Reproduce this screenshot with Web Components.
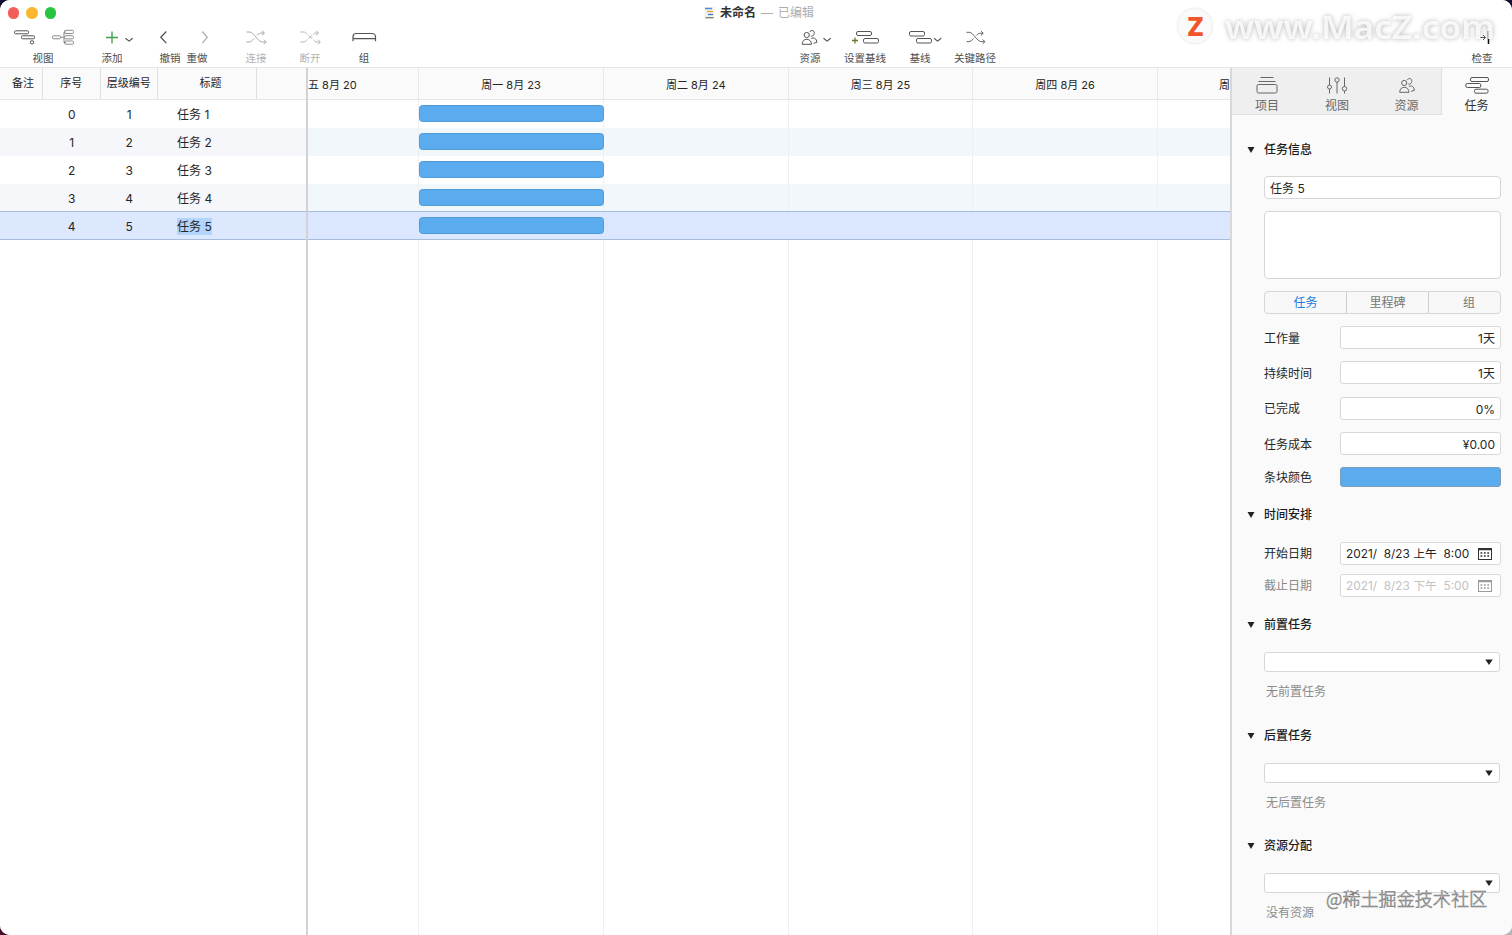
<!DOCTYPE html>
<html lang="zh-CN">
<head>
<meta charset="utf-8">
<title>未命名</title>
<style>
  body {
    margin: 0;
    background: linear-gradient(90deg, #4a0a2c 50%, #b5b5b9 50%) 0 100% / 100% 50% no-repeat #140f33;
    font-family: Inter, "Noto Sans CJK SC", sans-serif;
    font-size: 12px;
    color: #262626;
    overflow: hidden;
  }
</style>
</head>
<body>
<project-window></project-window>

<script>
/* base comun: cada elemento define su html y sus estilos */
class BaseElement extends HTMLElement {
  constructor() {
    super();
    this.attachShadow({ mode: 'open' });
  }

  connectedCallback() {
    this.shadowRoot.innerHTML = `<style>* { box-sizing: border-box; }</style>${this.render()}`;
  }
}

/* dibujos de los iconos */
const people = `
  <circle cx="5.200" cy="5" r="2.600"/><path d="M.7 14.300c0-3 1.700-5 4.500-5s4.800 2 4.800 5z"/>
  <path d="M8.200 2.100C8.900.7 10.300.2 11.500.7c1.500.7 1.600 2.700.8 4.100-.7 1.200-2 1.700-3 1.200"/>
  <path d="M9.800 8.600c2.600-1.600 5.400 0 5.600 3.800l-3.300.9"/>`;
const shuffle = `
  <path d="M0 2.500h3c4.500 0 8 10 13 10h3.500M0 12.500h2.500c1.800 0 3.500-1.500 5-3.300M10.500 6c1.500-1.800 3-2.500 5-2.500h2"/>
  <path d="M15.500 1.200l2.500 2.300-2.500 2.300M17.500 10.200l2.300 2.300-2.300 2.300"/>`;
const chevron = '<path d="M0 0l3.600 2.800L7.200 0"/>';

const icons = {
  view: `<g><rect x="1.500" y="4.800" width="14" height="3" rx="1"/><rect x="8.500" y="9.800" width="13" height="3" rx="1"/><circle cx="19" cy="16.300" r="1.700"/></g>
    <g stroke="#8b8b8b"><rect x="39.500" y="9.800" width="8" height="3" rx="1"/><path d="M47.500 11.300h3.500M51 5.800v11M51 6h2M51 16.500h2"/>
    <rect x="51.500" y="4.300" width="9" height="3.200" rx="1.200"/><rect x="51.500" y="9.700" width="9" height="3.200" rx="1.200"/><rect x="51.500" y="15" width="9" height="3.200" rx="1.200"/></g>`,
  add: `<path d="M22 5.500v12M16 11.500h12" stroke="#41a047" stroke-width="1.300"/><g transform="translate(35.500 12.300)" stroke-width="1.200">${chevron}</g>`,
  undo: '<path d="M9.300 5.500L3.800 11.300l5.500 5.800" stroke-width="1.300"/>',
  redo: '<path d="M18.300 5.500l5 5.800-5 5.800" stroke="#aaa" stroke-width="1.200"/>',
  link: `<g transform="translate(3.500 3.500)" stroke="#a8a8a8">${shuffle}</g>`,
  unlink: `<g transform="translate(3.500 3.500)" stroke="#b4b4b4"><path d="M0 2.500h3c1.500 0 2.600 1 3.500 2.300M0 12.500h2.500c1.800 0 3-1 4.200-2.500M13 10.200c1 1.500 2.200 2.300 3.500 2.300h3M12.700 4.800c.9-.9 1.800-1.300 3-1.300h2M8 5.700l3.700 3.700M11.700 5.700L8 9.400"/><path d="M15.500 1.200l2.500 2.300-2.500 2.300M17.500 10.200l2.300 2.300-2.300 2.300"/></g>`,
  group: '<path d="M2 15.200V10.500C2 8.500 3.500 7.500 5 7.500h16c1.500 0 3.500 1 3.500 3v4.700M2 12.700h22.500" stroke-width="1.200"/>',
  people: `<g transform="translate(13.500 4)">${people}</g><g transform="translate(35.500 12.300)" stroke-width="1.200">${chevron}</g>`,
  setBaseline: `<rect x="13.500" y="5.500" width="15" height="4" rx="1.500"/><rect x="20.500" y="12.500" width="15" height="4.500" rx="1.500"/><path d="M12 11.500v6M9 14.500h6" stroke="#6c7a2c" stroke-width="1.300"/>`,
  baseline: `<rect x="11.500" y="5.500" width="15" height="4.500" rx="1.500"/><rect x="18.500" y="12.500" width="15" height="4.500" rx="1.500"/><g transform="translate(36 12.300)" stroke-width="1.200">${chevron}</g>`,
  path: `<g transform="translate(13.500 4) scale(.93)">${shuffle}</g>`,
  inspect: '<path d="M11 11.500h5M14 9l2.500 2.500L14 14" stroke="#555"/><path d="M19.500 5v13" stroke="#111" stroke-width="1.500"/>',
};

class ToolItem extends BaseElement {
  render() {
    const width = this.getAttribute('width') || 26;
    return `
      <style>
        :host {
          display: flex;
          flex-direction: column;
          align-items: center;
          width: ${width}px;
          font-size: 10.500px;
          line-height: 14px;
          color: #4e4e4e;
          white-space: nowrap;
        }
        :host([off]) { color: #b3b3b3; }
        svg { display: block; overflow: visible; margin-bottom: 2px; }
        span { display: flex; justify-content: center; width: 0; }
      </style>
      <svg width="${width}" height="24" fill="none" stroke="#555" stroke-linejoin="round">${icons[this.getAttribute('icon')]}</svg>
      <span><slot></slot></span>
    `;
  }
}
customElements.define('tool-item', ToolItem);

/* barra de titulo y herramientas */
class WindowToolbar extends BaseElement {
  render() {
    return `
      <style>
        :host {
          display: block;
          height: 68px;
          background: #fff;
          border-bottom: 1px solid #e6e6e6;
        }
        .title {
          display: grid;
          grid-template-columns: 1fr auto 1fr;
          align-items: center;
          height: 26px;
          padding: 0 0 0 7px;
        }
        .lights { display: flex; gap: 7.500px; padding-left: .5px; }
        .lights i { width: 11.300px; height: 11.300px; border-radius: 50%; background: #f35f58; }
        .lights i:nth-child(2) { background: #fbb72f; }
        .lights i:nth-child(3) { background: #28c440; }
        .name { display: flex; align-items: center; gap: 5px; margin-right: 1px; color: #adadad; line-height: 16px; }
        b { font-weight: 600; color: #333; }
        .tools { display: flex; padding: 0 17px 0 13px; }
        svg { display: block; }
      </style>
      <div class="title">
        <div class="lights"><i></i><i></i><i></i></div>
        <div class="name">
          <svg width="11" height="12">
            <rect x=".5" width="10" height="12" fill="#f4f1ea"/>
            <path d="M1 1.500h7" stroke="#4c91d8" stroke-width="1.500"/><path d="M3 4.500h6" stroke="#e0a33c" stroke-width="1.300"/>
            <path d="M4 7.500h5" stroke="#3f79c2" stroke-width="1.300"/><path d="M1.500 10.700h8" stroke="#777" stroke-width="1.200"/>
          </svg>
          <b>未命名</b><span>—</span><span>已编辑</span>
        </div>
      </div>
      <div class="tools">
        <tool-item icon="view" width="60">视图</tool-item>
        <tool-item icon="add" width="44" style="margin-left:17px">添加</tool-item>
        <tool-item icon="undo" style="margin-left:23px">撤销</tool-item>
        <tool-item icon="redo" style="margin-left:1px">重做</tool-item>
        <tool-item icon="link" off style="margin-left:33px">连接</tool-item>
        <tool-item icon="unlink" off style="margin-left:28px">断开</tool-item>
        <tool-item icon="group" style="margin-left:28px">组</tool-item>
        <tool-item icon="people" width="44" style="margin-left:411px">资源</tool-item>
        <tool-item icon="setBaseline" width="44" style="margin-left:11px">设置基线</tool-item>
        <tool-item icon="baseline" width="44" style="margin-left:11px">基线</tool-item>
        <tool-item icon="path" width="44" style="margin-left:11px">关键路径</tool-item>
        <tool-item icon="inspect" style="margin-left:auto">检查</tool-item>
      </div>
    `;
  }
}
customElements.define('window-toolbar', WindowToolbar);

const tasks = [1, 2, 3, 4, 5];

/* tabla de tareas */
class TaskOutline extends BaseElement {
  render() {
    return `
      <style>
        :host {
          display: block;
          width: 308px;
          background: #fff;
          border-right: 2px solid #d2d2d2;
        }
        .head, .row { display: grid; grid-template-columns: 43px 57.500px 57.500px 99px 1fr; }
        .head {
          height: 32px;
          background: #fafafa;
          border-bottom: 1px solid #e6e6e6;
          font-size: 11px;
          line-height: 31px;
          text-align: center;
        }
        .head span { border-right: 1px solid #e0e0e0; white-space: nowrap; }
        .head span:first-child { padding-left: 4px; }
        .head span:nth-child(4) { padding-left: 7px; }
        .head span:last-child { border: 0; }
        .row { height: 28px; line-height: 30px; text-align: center; }
        .row:nth-child(odd) { background: #f5f7fb; }
        .row:last-child {
          height: 29px;
          margin-top: -1px;
          background: #dbe8fe;
          border: solid #a8bcdc;
          border-width: 1px 0;
        }
        .row .name { text-align: left; padding-left: 19px; }
        mark { background: #b3d4fb; color: inherit; padding: 1px 0; }
      </style>
      <div class="head"><span>备注</span><span>序号</span><span>层级编号</span><span>标题</span><span></span></div>
      ${tasks.map((n, i) => `
        <div class="row">
          <span></span><span>${i}</span><span>${n}</span>
          <span class="name">${n === 5 ? `<mark>任务 ${n}</mark>` : `任务 ${n}`}</span>
        </div>`).join('')}
    `;
  }
}
customElements.define('task-outline', TaskOutline);

/* diagrama de gantt */
class GanttChart extends BaseElement {
  render() {
    const days = ['周一 8月 23', '周二 8月 24', '周三 8月 25', '周四 8月 26'];
    return `
      <style>
        :host {
          --day: 184.700px;
          display: flex;
          flex-direction: column;
          flex: 1;
          min-width: 0;
          background: #fff;
        }
        .head {
          display: flex;
          flex: none;
          height: 32px;
          background: #fafafa;
          border-bottom: 1px solid #e6e6e6;
          font-size: 11px;
          line-height: 35px;
          text-align: center;
          white-space: nowrap;
        }
        .head span { flex: none; width: var(--day); border-right: 1px solid #e9e9e9; }
        /* los dias de los extremos solo se ven en parte */
        .head .first { width: 111.200px; text-align: left; }
        .head .last { flex: 1; width: auto; border: 0; text-align: right; }
        .body {
          flex: 1;
          background: repeating-linear-gradient(90deg, transparent 0 183.700px, #f0f0f0 183.700px 184.700px) -73.500px 0 / 1200px 100% no-repeat;
        }
        .row { height: 28px; padding: 5px 0 0 111px; }
        .row:nth-child(even) { background: rgba(232, 240, 248, .55); }
        .row:last-child {
          height: 29px;
          margin-top: -1px;
          background: rgba(217, 230, 254, .94);
          border: solid #a8bcdc;
          border-width: 1px 0;
        }
        .bar {
          width: 185px;
          height: 17px;
          background: #5aacee;
          border: 1px solid #509bd8;
          border-radius: 3.500px;
        }
      </style>
      <div class="head">
        <span class="first">五 8月 20</span>${days.map(day => `<span>${day}</span>`).join('')}<span class="last">周</span>
      </div>
      <div class="body">${tasks.map(() => '<div class="row"><div class="bar"></div></div>').join('')}</div>
    `;
  }
}
customElements.define('gantt-chart', GanttChart);

/* pestañas del inspector */
class InspectorTabs extends BaseElement {
  render() {
    return `
      <style>
        :host { display: grid; grid-template-columns: repeat(4, 1fr); height: 47px; }
        div {
          display: flex;
          flex-direction: column;
          align-items: center;
          padding-top: 8px;
          background: #efefef;
          border-bottom: 1px solid #dedede;
          color: #6a6a6a;
          line-height: 17px;
        }
        .on { background: #fafafa; border-color: #fafafa; color: #333; padding-right: 1px; }
        .before { border-right: 1px solid #dedede; }
        svg { display: block; overflow: visible; margin-bottom: 3px; }
      </style>
      <div>
        <svg width="22" height="18" fill="none" stroke="#666"><path d="M4.500 1.500h13M2.500 5.500h17"/><rect x="1" y="8.500" width="20" height="8.500" rx="1.500"/></svg>
        项目
      </div>
      <div>
        <svg width="22" height="18" fill="none" stroke="#666"><path d="M3.500 1.500v7.500M3.500 13v4.500M11 6v11.500M18.500 1.500v9M18.500 15v2.500"/><circle cx="3.500" cy="11" r="2"/><circle cx="11" cy="4" r="2.200"/><circle cx="18.500" cy="12.700" r="2.200"/></svg>
        视图
      </div>
      <div class="before">
        <svg width="18" height="18" fill="none" stroke="#666"><g transform="translate(1 2)">${people}</g></svg>
        资源
      </div>
      <div class="on">
        <svg width="24" height="18" fill="none" stroke="#555"><rect x="5.500" y="1.500" width="18" height="4" rx="1.500"/><rect x=".8" y="7.500" width="15" height="4" rx="1.500"/><rect x="9.500" y="13.200" width="13.500" height="4" rx="1.500"/></svg>
        任务
      </div>
    `;
  }
}
customElements.define('inspector-tabs', InspectorTabs);

/* seccion plegable */
class InspectorSection extends BaseElement {
  render() {
    return `
      <style>
        :host { display: block; padding: 0 11px 0 32px; margin-top: 19px; }
        h3 {
          display: flex;
          align-items: center;
          margin: 0 0 var(--heading-gap, 18px) -17px;
          font-size: 12px;
          font-weight: 500;
          line-height: 18px;
          color: #1c1c1c;
        }
        h3 svg { margin-right: 9px; }
      </style>
      <h3><svg width="8" height="8"><path d="M.5 1h7L4 7z" fill="#222"/></svg>${this.getAttribute('heading')}</h3>
      <slot></slot>
    `;
  }
}
customElements.define('inspector-section', InspectorSection);

class FieldRow extends BaseElement {
  render() {
    return `
      <style>
        :host { display: flex; align-items: center; height: 23px; margin-top: 12.400px; }
        label { width: 76px; line-height: 18px; padding-top: 2px; }
        .box {
          flex: 1;
          height: 23px;
          padding: 0 5px;
          background: #fff;
          border: 1px solid #d8d8d8;
          border-radius: 3px;
          line-height: 23px;
          text-align: right;
        }
        :host([color]) { height: 20px; margin-top: 11.900px; }
        :host([color]) label { padding-top: 1px; }
        :host([color]) .box { height: 20px; background: #5aacee; border-color: #7c9db8; }
        :host([date]) label { padding-top: 1px; }
        :host([date]) .box {
          display: flex;
          justify-content: space-between;
          align-items: center;
          padding: 0 8px 0 5px;
          font-size: 11.850px;
        }
        .text { white-space: pre; }
        :host([date]) .text { padding-top: 1px; }
        :host([date]) { margin-top: 9px; }
        :host([date]:first-child) { margin-top: 0; }
        :host([off]) label { color: #888; }
        :host([off]) .box { color: #c2c2c2; }
        svg { color: #333; }
        :host([off]) svg { color: #999; }
      </style>
      <label>${this.getAttribute('label')}</label>
      <div class="box">
        <span class="text"><slot></slot></span>
        ${this.hasAttribute('date') ? `
          <svg width="14" height="12" fill="none" stroke="currentColor"><rect x=".5" y=".5" width="13" height="11"/><path d="M0 1.500h14" stroke-width="1.500"/>
          <path d="M2.500 5h9M2.500 8h9" stroke-width="1.700" stroke-dasharray="1.800 1.600"/></svg>` : ''}
      </div>
    `;
  }
}
customElements.define('field-row', FieldRow);

/* selector vacio con su nota */
class LinkPicker extends BaseElement {
  render() {
    return `
      <style>
        :host { display: block; padding-bottom: 6.700px; }
        .select {
          display: flex;
          align-items: center;
          justify-content: flex-end;
          width: 236px;
          height: 20px;
          padding-right: 6px;
          background: #fff;
          border: 1px solid #d6d6d6;
          border-radius: 3px;
        }
        .note { margin: 11px 0 0 2px; line-height: 18px; color: #8c8c8c; }
      </style>
      <div class="select"><svg width="8" height="8"><path d="M.3 1.500h7.400L4 7z" fill="#222"/></svg></div>
      <div class="note"><slot></slot></div>
    `;
  }
}
customElements.define('link-picker', LinkPicker);

class TaskInspector extends BaseElement {
  render() {
    return `
      <style>
        :host {
          display: block;
          width: 282px;
          background: #fafafa;
          border-left: 2px solid #d8d8d8;
        }
        inspector-section:nth-of-type(1) { --heading-gap: 17px; margin-top: 26px; }
        .input, .notes, .types {
          background: #fff;
          border: 1px solid #d6d6d6;
          border-radius: 4px;
        }
        .input { height: 23px; padding-left: 5px; line-height: 23px; }
        .notes { height: 68px; margin: 12px 0; }
        .types {
          display: grid;
          grid-template-columns: 81px 82px 1fr;
          height: 23px;
          margin-bottom: 12px;
          background: #f8f8f8;
          line-height: 21px;
          text-align: center;
          color: #777;
        }
        .types span + span { border-left: 1px solid #d0d0d0; }
        .types span:last-child { padding-left: 9px; }
        .types .on { color: #187fdd; }
        .first { margin-top: 0; }
      </style>
      <inspector-tabs></inspector-tabs>
      <inspector-section heading="任务信息">
        <div class="input">任务 5</div>
        <div class="notes"></div>
        <div class="types"><span class="on">任务</span><span>里程碑</span><span>组</span></div>
        <field-row class="first" label="工作量">1天</field-row>
        <field-row label="持续时间">1天</field-row>
        <field-row label="已完成">0%</field-row>
        <field-row label="任务成本">¥0.00</field-row>
        <field-row label="条块颜色" color></field-row>
      </inspector-section>
      <inspector-section heading="时间安排">
        <field-row date label="开始日期">2021/  8/23 上午  8:00</field-row>
        <field-row date off label="截止日期">2021/  8/23 下午  5:00</field-row>
      </inspector-section>
      <inspector-section heading="前置任务"><link-picker>无前置任务</link-picker></inspector-section>
      <inspector-section heading="后置任务"><link-picker>无后置任务</link-picker></inspector-section>
      <inspector-section heading="资源分配"><link-picker>没有资源</link-picker></inspector-section>
    `;
  }
}
customElements.define('task-inspector', TaskInspector);

/* marcas de agua encima de la ventana */
class WaterMarks extends BaseElement {
  render() {
    return `
      <style>
        :host { position: absolute; inset: 0; pointer-events: none; }
        svg { display: block; }
        .site {
          font: 600 33px "Noto Sans", sans-serif;
          fill: #fff;
          fill-opacity: .8;
          filter: drop-shadow(0 0 2.500px rgba(0, 0, 0, .36));
        }
        .z { font: 800 27px "Noto Sans", sans-serif; fill: #f0562a; }
        .author {
          font: 300 18px "Noto Sans CJK SC", sans-serif;
          fill: #fff;
          stroke: #777;
          stroke-width: .6;
        }
      </style>
      <svg width="1512" height="935">
        <circle cx="1195" cy="26" r="17" fill="#fafafa" style="filter:drop-shadow(0 0 1.500px rgba(0,0,0,.15))"/>
        <text class="z" x="1187.500" y="35.500" textLength="16" lengthAdjust="spacingAndGlyphs">Z</text>
        <text class="site" x="1225" y="38.500" textLength="270" lengthAdjust="spacingAndGlyphs">www.MacZ.com</text>
        <text class="author" x="1326" y="906" textLength="161">@稀土掘金技术社区</text>
      </svg>
    `;
  }
}
customElements.define('water-marks', WaterMarks);

class ProjectWindow extends BaseElement {
  render() {
    return `
      <style>
        :host {
          display: flex;
          flex-direction: column;
          position: relative;
          height: 935px;
          width: 1512px;
          background: #fff;
          border-radius: 10px;
          overflow: hidden;
        }
        main { display: flex; flex: 1; min-height: 0; }
      </style>
      <window-toolbar></window-toolbar>
      <main>
        <task-outline></task-outline>
        <gantt-chart></gantt-chart>
        <task-inspector></task-inspector>
      </main>
      <water-marks></water-marks>
    `;
  }
}
customElements.define('project-window', ProjectWindow);
</script>
</body>
</html>
